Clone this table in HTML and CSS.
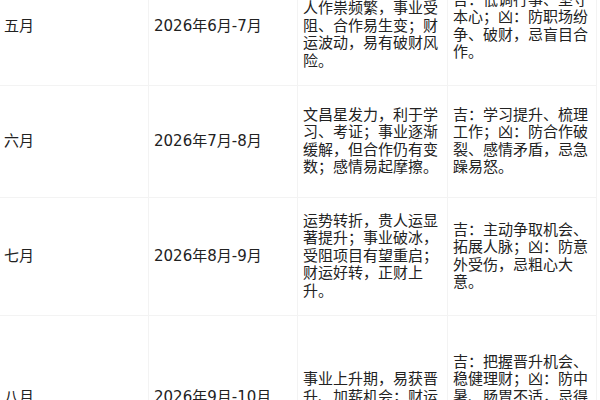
FILE: index.html
```html
<!DOCTYPE html>
<html lang="zh-CN">
<head>
<meta charset="utf-8">
<title>2026年运势月表</title>
<link rel="stylesheet" href="styles.css">
</head>
<body>
<table class="fortune">
  <colgroup>
    <col class="c-month">
    <col class="c-date">
    <col class="c-desc">
    <col class="c-advice">
  </colgroup>
  <tbody>
    <tr class="r-tall">
      <td>五月</td>
      <td>2026年6月-7月</td>
      <td>本月逢冲犯太岁，小人作祟频繁，事业受阻、合作易生变；财运波动，易有破财风险。</td>
      <td>吉：低调行事、坚守本心；凶：防职场纷争、破财，忌盲目合作。</td>
    </tr>
    <tr class="r-mid">
      <td>六月</td>
      <td>2026年7月-8月</td>
      <td>文昌星发力，利于学习、考证；事业逐渐缓解，但合作仍有变数；感情易起摩擦。</td>
      <td>吉：学习提升、梳理工作；凶：防合作破裂、感情矛盾，忌急躁易怒。</td>
    </tr>
    <tr class="r-tall">
      <td>七月</td>
      <td>2026年8月-9月</td>
      <td>运势转折，贵人运显著提升；事业破冰，受阻项目有望重启；财运好转，正财上升。</td>
      <td>吉：主动争取机会、拓展人脉；凶：防意外受伤，忌粗心大意。</td>
    </tr>
    <tr class="r-big">
      <td>八月</td>
      <td>2026年9月-10月</td>
      <td>事业上升期，易获晋升、加薪机会；财运亨通，偏财运佳。</td>
      <td>吉：把握晋升机会、稳健理财；凶：防中暑、肠胃不适，忌得意忘形、铺张浪费，谨言慎行。</td>
    </tr>
  </tbody>
</table>
</body>
</html>
```
FILE: styles.css
```css
html, body {
  margin: 0;
  padding: 0;
  background: #ffffff;
}

body {
  overflow: hidden;
  width: 600px;
  height: 400px;
}

.fortune {
  border-collapse: collapse;
  table-layout: fixed;
  width: 598px;
  margin: -33px 0 0 -2px;
  font-family: "DejaVu Sans", "Noto Sans CJK SC", sans-serif;
  font-size: 15px;
  line-height: 17.4px;
  color: #222222;
}

.c-month { width: 150px; }
.c-date { width: 149px; }
.c-desc { width: 150px; }
.c-advice { width: 149px; }

.fortune td {
  border: 1px solid #f3f3f3;
  padding: 0 4px 0 5px;
  vertical-align: middle;
  text-align: left;
  word-break: break-all;
}

.r-tall td { height: 117px; }
.r-mid td { height: 111px; }
.r-big td { height: 163px; }
```
